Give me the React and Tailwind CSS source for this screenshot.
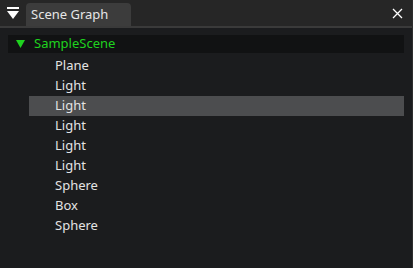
export default function App() {
  const items = ["Plane", "Light", "Light", "Light", "Light", "Light", "Sphere", "Box", "Sphere"];
  return (
    <div
      className="w-[413px] h-[268px] bg-[#1b1c1e] flex flex-col overflow-hidden border-r border-[#2e2e2e]"
      style={{ fontFamily: '"Noto Sans", "Open Sans", sans-serif' }}
    >
      <div className="h-[26px] bg-[#262626] flex items-end shrink-0">
        <div className="w-[26px] h-[26px] flex items-center justify-center">
          <svg width="12" height="13" viewBox="0 0 12 13">
            <rect x="0" y="0" width="12" height="2" fill="#ffffff" />
            <polygon points="0,4 12,4 6,12" fill="#ffffff" />
          </svg>
        </div>
        <div className="w-[105px] h-[23px] bg-[#3c3c3c] rounded-t-[4px] flex items-center pl-[5px] text-[13px] text-[#e6e6e6]">
          Scene Graph
        </div>
        <div className="flex-1" />
        <div className="w-[30px] h-[26px] flex items-center justify-center">
          <svg width="11" height="11" viewBox="0 0 11 11">
            <path d="M1 1L10 10M10 1L1 10" stroke="#ffffff" strokeWidth="1.3" />
          </svg>
        </div>
      </div>
      <div className="h-[2px] bg-[#3a3a3a] shrink-0" />
      <div className="flex-1 pt-[7px] pl-[8px] pr-[8px]">
        <div className="h-[18px] bg-[#111213] flex items-center text-[13px] text-[#1fd21f]">
          <svg width="9" height="8" viewBox="0 0 9 8" className="ml-[8px] mr-[9px]">
            <polygon points="0,0 9,0 4.5,8" fill="#1fd21f" />
          </svg>
          SampleScene
        </div>
        <div className="pt-[3px]">
          {items.map((name, i) => (
            <div
              key={i}
              className={
                "h-[20px] ml-[21px] pl-[26px] flex items-center text-[13px] text-[#e3e3e3] " +
                (i === 2 ? "bg-[#4c4d4f]" : "")
              }
            >
              {name}
            </div>
          ))}
        </div>
      </div>
    </div>
  );
}
